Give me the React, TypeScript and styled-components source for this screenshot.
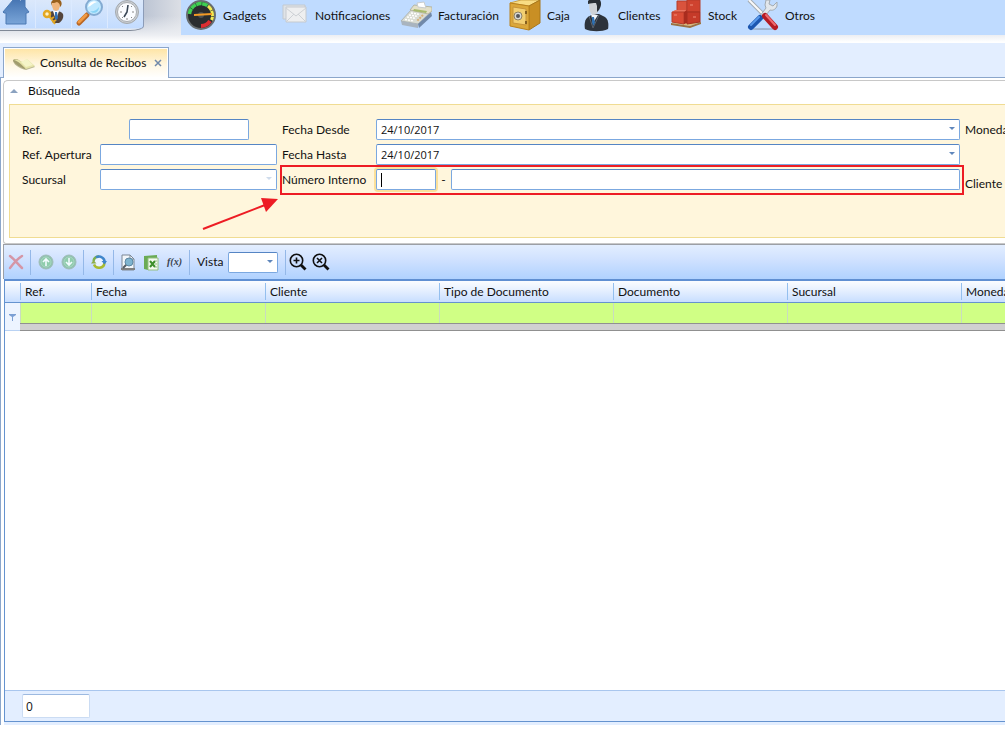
import React from 'react';
import styled, { createGlobalStyle } from 'styled-components';

const GlobalStyle = createGlobalStyle`
  * { box-sizing: border-box; }
  body {
    margin: 0;
    background: #fff;
    color: #111;
    font-family: Lato, "Open Sans", sans-serif;
    font-size: 12px;
    line-height: 16px;
  }
  button, input, select { font: inherit; color: inherit; margin: 0; }
  button { background: none; border: 0; padding: 0; cursor: pointer; }
  svg { display: block; flex: none; }
`;

const Page = styled.div`
  display: flex;
  flex-direction: column;
  min-height: 100vh;
  overflow: hidden;
`;

const Header = styled.header`
  display: flex;
  align-items: flex-start;
  height: 43px;
  background: linear-gradient(transparent 16px, #eceef2 35px, #fff 42px),
    linear-gradient(90deg, #b9c2d2 140px, #dcdfe5 181px);
`;

const QuickBar = styled.div`
  display: flex;
  flex: none;
  width: 144px;
  height: 31px;
  border-bottom: 1px solid #7f8896;
  border-right: 1px solid #8c9cb8;
  border-bottom-right-radius: 14px 5px;
  background: linear-gradient(#dbe8fb, #c3dcff 28px, #e4e9f0 29px);
`;

const QuickButton = styled.button`
  width: 36px;
  height: 28px;
  border-right: 1px solid #dceaff;
  &:last-child { border-right: 0; }
`;

const Nav = styled.nav`
  flex: 1;
  display: grid;
  grid-template-columns: 92px 123px 109px 71px 90px 77px 1fr;
  height: 35px;
  margin-left: 37px;
  padding-left: 4px;
  background: #bfdbff;
`;

const NavLink = styled.a`
  display: flex;
  align-items: center;
  gap: 6px;
  height: 32px;
  color: inherit;
  text-decoration: none;
  white-space: nowrap;
`;

const TabStrip = styled.div`
  display: flex;
  align-items: flex-end;
  height: 35px;
  padding-left: 3px;
  background: #e3eeff;
  box-shadow: inset 0 -1px #8ba6cb;
`;

const Tab = styled.div`
  display: flex;
  align-items: center;
  gap: 4px;
  width: 166px;
  height: 31px;
  padding-left: 8px;
  border: 1px solid #8ba6cb;
  border-bottom: 0;
  box-shadow: inset 0 0 0 1px #fff;
  background: linear-gradient(#fee4a3, #fff8e6 60%, #fff);
  white-space: nowrap;
`;

const TabTitle = styled.span`
  flex: 1;
`;

const TabClose = styled.button`
  width: 8px;
  height: 8px;
  margin-right: 6px;
`;

const Workspace = styled.main`
  flex: 1;
  display: flex;
  flex-direction: column;
  margin-bottom: 4px;
  padding: 2px 0 0 2px;
  border-left: 1px solid #8ba6cb;
`;

const SearchPanel = styled.section`
  padding: 0 0 5px 5px;
  border: 1px solid #c8c8c8;
  border-right: 0;
  border-radius: 5px 0 0 3px;
`;

const SearchTitle = styled.button`
  display: flex;
  align-items: center;
  gap: 10px;
  height: 23px;
  padding: 0 0 4px 1px;
`;

const SearchForm = styled.form`
  position: relative;
  display: grid;
  grid-template-columns: 255px minmax(0, 1fr) 40px;
  column-gap: 5px;
  height: 134px;
  padding: 14px 0 0 12px;
  border: 1px solid #f0dc93;
  border-right: 0;
  background: #fff6dc;
  overflow: hidden;
`;

const FieldColumn = styled.div<{ $gap?: number }>`
  display: flex;
  flex-direction: column;
  gap: ${(p) => p.$gap ?? 4}px;
`;

const Field = styled.div`
  display: flex;
  align-items: center;
  height: 21px;
`;

const Label = styled.label<{ $width?: number }>`
  flex: none;
  width: ${(p) => (p.$width ? `${p.$width}px` : 'auto')};
  white-space: nowrap;
`;

const TextInput = styled.input<{ $width?: number; $focused?: boolean }>`
  flex: ${(p) => (p.$width ? 'none' : '1')};
  width: ${(p) => p.$width ?? 0}px;
  min-width: 0;
  height: 21px;
  padding: 0 4px;
  border: 1px solid #7ba8e0;
  border-top-color: #5585c4;
  border-radius: 2px;
  background: #fff;
  outline: none;
  font-size: 11px;
  box-shadow: ${(p) => (p.$focused ? '0 0 0 2px #fbe09a' : 'none')};
`;

const Combo = styled.div<{ $width?: number; $muted?: boolean }>`
  position: relative;
  flex: ${(p) => (p.$width ? 'none' : '1')};
  width: ${(p) => (p.$width ? `${p.$width}px` : 'auto')};
  height: 21px;
  &::after {
    content: '';
    position: absolute;
    top: 8px;
    right: 5px;
    border: 3px solid transparent;
    border-top-color: ${(p) => (p.$muted ? '#cfdcec' : '#5f86bb')};
    border-bottom: 0;
    pointer-events: none;
  }
`;

const Select = styled.select`
  display: block;
  width: 100%;
  height: 21px;
  padding: 0 4px;
  border: 1px solid #7ba8e0;
  border-top-color: #5585c4;
  border-radius: 2px;
  background: #fff;
  outline: none;
  appearance: none;
  font-family: "Open Sans", sans-serif;
  font-size: 11px;
`;

const Dash = styled.span`
  width: 15px;
  text-align: center;
`;

const Caret = styled.i`
  position: absolute;
  left: 99px;
  top: 4px;
  width: 1px;
  height: 14px;
  background: #000;
`;

const HighlightedField = styled(Field)`
  position: relative;
  &::after {
    content: '';
    position: absolute;
    inset: -4px -4px -5px -2px;
    border: 2px solid #ed1c24;
    pointer-events: none;
  }
`;

const Arrow = styled.svg`
  position: absolute;
  left: 190px;
  top: 92px;
`;

const Toolbar = styled.div`
  display: flex;
  align-items: center;
  height: 35px;
  border-top: 1px solid #9c9fa5;
  border-left: 1px solid #9c9fa5;
  background: linear-gradient(#e3eeff, #cfe1ff 45%, #b0d2ff);
`;

const ToolButton = styled.button`
  display: flex;
  align-items: center;
  justify-content: center;
  width: 23px;
  height: 24px;
`;

const Separator = styled.i<{ $wide?: boolean }>`
  width: 1px;
  height: 25px;
  margin: ${(p) => (p.$wide ? '0 0 0 7px' : '0 3px')};
  background: #94b8e8;
`;

const ToolLabel = styled.label`
  width: 35px;
  padding-left: 4px;
`;

const GridArea = styled.section`
  flex: 1;
  display: flex;
  flex-direction: column;
  margin-left: 1px;
  border: 1px solid #6593cf;
  border-width: 2px 0 1px 1px;
  border-top-color: #5f8fd2;
  overflow: hidden;
`;

const Table = styled.table`
  width: 100%;
  min-width: 1131px;
  table-layout: fixed;
  border-collapse: separate;
  border-spacing: 0;
`;

const HeadCell = styled.th`
  height: 22px;
  padding: 0 5px;
  border-bottom: 1px solid #6593cf;
  background: linear-gradient(90deg, #94bfee 1px, transparent 1px) 0 2px / 100% 17px no-repeat,
    linear-gradient(#fbfdff, #e3eeff 50%, #c8deff);
  font-weight: 400;
  text-align: left;
  white-space: nowrap;
  &:first-child { background: linear-gradient(#fbfdff, #e3eeff 50%, #c8deff); }
`;

const FilterCell = styled.td`
  height: 28px;
  padding: 0;
  border-bottom: 1px solid #909090;
  background: linear-gradient(90deg, #c9dcc0 1px, transparent 1px) 0 0 / 100% 20px no-repeat,
    linear-gradient(#d0ff85 20px, #909090 20px, #909090 21px, #d0d0d0 21px);
`;

const FilterMark = styled.td`
  height: 28px;
  padding: 2px 0 0 4px;
  border-bottom: 1px solid #b9d2f3;
  background: #edf4ff;
`;

const GridBody = styled.div`
  flex: 1;
`;

const GridFooter = styled.footer`
  height: 31px;
  padding: 3px 0 0 17px;
  border-top: 1px solid #a9c6ee;
  background: #e3eeff;
`;

const CountInput = styled.input`
  display: block;
  width: 68px;
  height: 24px;
  padding: 0 3px;
  border: 1px solid #cbdcf3;
  border-top-color: #9cb9e0;
  border-radius: 2px;
  background: #fff;
  outline: none;
  font-family: "Open Sans", sans-serif;
`;

const BottomStrip = styled.div`
  height: 3px;
  margin-left: 1px;
  background: #e3eeff;
`;

const HomeIcon = () => (
  <svg width="35" height="28" viewBox="0 0 35 28">
    <defs>
      <linearGradient id="home" x2="0" y2="1">
        <stop offset="0" stopColor="#4776b4" />
        <stop offset="1" stopColor="#7aa5d8" />
      </linearGradient>
    </defs>
    <path d="M3 12 13 0h6l2 2V0h4v7l4 5-2 1h-1v11H6V13H4z" fill="url(#home)" stroke="#4a78b3" />
  </svg>
);

const UserKeyIcon = () => (
  <svg width="35" height="28" viewBox="0 0 35 28">
    <path d="M13 13c2-2 4-2 7-2s6 1 7 3c1 4-1 7-4 9h-6z" fill="#54453c" />
    <path d="M17 11h6l-3 9z" fill="#fff" />
    <path d="M19 12h2l1 6-2 3-1-3z" fill="#3474b8" />
    <ellipse cx="20" cy="5" rx="4" ry="6" fill="#f0b57c" />
    <path d="M15 6c0-3 0-5 2-6h7c2 2 2 4 1 6l-1 1c0-3-1-4-3-5-2 1-4 1-5 1z" fill="#99601d" />
    <circle cx="11" cy="14" r="3" fill="#fff3c8" stroke="#e4a822" strokeWidth="2.5" />
    <path d="M13 16l6 8m-2-2 3-2m-5-1 3-2" fill="none" stroke="#e4a822" strokeWidth="2" />
  </svg>
);

const SearchIcon = () => (
  <svg width="35" height="28" viewBox="0 0 35 28">
    <path d="M15 13l2 2" stroke="#8fa3b8" strokeWidth="4" />
    <path d="M15 15l-8 8" stroke="#b96624" strokeWidth="5" strokeLinecap="round" />
    <path d="M14 15l-7 7" stroke="#f09a45" strokeWidth="3" strokeLinecap="round" />
    <circle cx="22" cy="7" r="8" fill="#bfe8ff" stroke="#84abd2" strokeWidth="2" />
    <path d="M16 7c1-5 5-7 9-5-4 1-6 4-9 5z" fill="#fff" />
    <path d="M18 11c3 1 6 0 9-4 0 5-5 8-9 4z" fill="#87d2f5" />
  </svg>
);

const ClockIcon = () => (
  <svg width="35" height="28" viewBox="0 0 35 28">
    <circle cx="19" cy="12" r="11.5" fill="#c9cdd1" stroke="#a3a8ad" />
    <circle cx="19" cy="12" r="9.5" fill="#fafcff" stroke="#a9adb2" />
    <path d="M20 5l-1 7-3 5" fill="none" stroke="#384656" strokeWidth="1.6" />
    <path d="M12 12h2m10 0h2M19 18v2M14 6l1 1m8 0 1-1M14 18l1-1m8 0 1 1" stroke="#888" />
  </svg>
);

const GaugeIcon = () => (
  <svg width="32" height="32" viewBox="0 0 32 32">
    <circle cx="16" cy="15" r="14" fill="#2a2d2f" stroke="#686e70" strokeWidth="2" />
    <path d="M4.5 14A11.5 11.5 0 0 1 23 6" fill="none" stroke="#3ecf52" strokeWidth="3.5" strokeDasharray="5.5 .5" />
    <path d="M23 6a11.5 11.5 0 0 1 3.500 14" fill="none" stroke="#f1ea55" strokeWidth="3" strokeDasharray="5.5 .5" />
    <path d="M25 21a11 11 0 0 1-9 5" fill="none" stroke="#db2e32" strokeWidth="4" />
    <circle cx="16" cy="15" r="3" fill="#4c5153" />
    <path d="M9 14l18-1v2L9 16z" fill="#f39a25" />
  </svg>
);

const MailIcon = () => (
  <svg width="32" height="32" viewBox="-2 0 32 32">
    <path d="M4 5h22v14H4z" fill="#dfe3e7" stroke="#c3c9cf" />
    <path d="M7 7h20v15H7z" fill="#eeeff0" stroke="#c6cacf" />
    <path d="M7 8l10 8L27 8M7 22l8-8m12 8-8-8" fill="none" stroke="#cdd1d5" />
  </svg>
);

const RegisterIcon = () => (
  <svg width="32" height="32" viewBox="0 0 32 32">
    <path d="M1 21 12 9l19 3-13 12z" fill="#d9dcd3" stroke="#b0b5b1" />
    <path d="M1 21l17 3v4L2 25z" fill="#a9b4bf" />
    <path d="M18 24l13-12 1 4-13 12z" fill="#7189a9" />
    <path d="M10 10l4-5 18 2v4l-4 3z" fill="#e3e0c8" stroke="#b5b6a4" />
    <path d="M17 3l7-1 2 6-8-1z" fill="#fff" stroke="#c9cccc" />
    <path d="M14 9l13 2-1 2-13-2z" fill="#a8bb6d" />
    <path d="M11 13l9 1.500m-11 .5 9 1.500m-11 .5 9 1.500M5 19.500l9 1.500" stroke="#fff" strokeWidth="1.5" strokeDasharray="2 1" />
    <path d="M23 15l-6 6" stroke="#d7b078" strokeWidth="2" strokeDasharray="2 1" />
  </svg>
);

const SafeIcon = () => (
  <svg width="32" height="32" viewBox="0 0 32 32">
    <path d="M1 3 12 0h19L20 6z" fill="#f8dc84" stroke="#cda344" />
    <path d="M20 6l11-6v23l-11 7z" fill="#c98f24" stroke="#a8771b" />
    <path d="M1 3l19 3v24L1 26z" fill="#dba73a" stroke="#b9811e" />
    <path d="M4 7l13 2v16L4 23z" fill="#f3cf72" stroke="#c7943a" />
    <circle cx="9" cy="16" r="4" fill="#d9d9d5" stroke="#8d8063" />
    <circle cx="9" cy="16" r="2" fill="#55565a" />
    <path d="M17 11v3m0 7v3" stroke="#86601f" strokeWidth="2" />
  </svg>
);

const ClientIcon = () => (
  <svg width="32" height="32" viewBox="0 0 32 32">
    <path d="M5 29c-1-5 0-10 3-12l5-3h6l6 3c3 2 4 7 3 12-6 3-17 3-23 0z" fill="#2d333b" />
    <path d="M11 14l2 9 5-8z" fill="#f2f6fa" />
    <path d="M12 17h2l1 6-2 3-1-4z" fill="#2f71b3" />
    <path d="M9 4c0 5 1 10 4 11 4 0 6-4 6-9l-2-4-7-1z" fill="#cfd3d7" />
    <path d="M8 4V1l1-1h11c2 3 1 7-1 10l-2 2V6l-1-3c-3 0-5 0-8 1z" fill="#2a3036" />
    <path d="M9 16l4 12m6-13-6 13" stroke="#59626d" />
  </svg>
);

const StockIcon = () => (
  <svg width="32" height="32" viewBox="0 0 32 32">
    <path d="M1 23l9-3 21 2-11 4z" fill="#dcb878" />
    <path d="M1 23l19 3v2L1 25zM20 26l11-4v2l-11 4z" fill="#9b7140" />
    <path d="M7 1h10v11H7z" fill="#d9533d" stroke="#b53c2b" />
    <path d="M17 0h13v12H17z" fill="#cf432f" stroke="#b53c2b" />
    <path d="M17 12h13v10l-13 2z" fill="#c53a29" stroke="#a62f20" />
    <path d="M2 12l3-2h12l-3 2z" fill="#e9745f" />
    <path d="M2 12h12v12L2 22z" fill="#d94b35" stroke="#b53c2b" />
    <path d="M14 12l3-2v13l-3 1z" fill="#a92c1e" />
    <path d="M4 15h3m13-10h3m0 12h3" stroke="#ee8d7b" />
  </svg>
);

const ToolsIcon = () => (
  <svg width="32" height="32" viewBox="0 0 32 32">
    <ellipse cx="16" cy="29" rx="13" ry="1" fill="#9fb4cf" />
    <path d="M2 0l16 16" stroke="#a3abb2" strokeWidth="4" />
    <path d="M2 0l16 16" stroke="#fafafa" strokeWidth="2" />
    <path d="M19 0l-1 5 1 3-6 8 3 3 7-9c3 1 6-1 7-4V2l-4 4-4-2 1-4z" fill="#e2e7ec" stroke="#a3abb2" />
    <path d="M13 18l-9 9" stroke="#1d57b0" strokeWidth="6" strokeLinecap="round" />
    <path d="M12 17l-8 8" stroke="#5a9bec" strokeWidth="2" strokeLinecap="round" />
    <path d="M18 16l10 11" stroke="#b51c24" strokeWidth="6" strokeLinecap="round" />
    <path d="M19 15l9 10" stroke="#ef6a6e" strokeWidth="2" strokeLinecap="round" />
  </svg>
);

const ReceiptIcon = () => (
  <svg width="24" height="16" viewBox="0 0 24 16">
    <path d="M1 5c0 4 5 8 13 10l9-3-3-3z" fill="#b9b694" />
    <path d="M1 5c2-2 5-1 7 1l6 6-1 2C8 12 2 9 1 5z" fill="#a19c6c" />
    <path d="M2 5c3-1 5 0 8 2l5-3 8 7-9 3C9 9 6 6 2 5z" fill="#e6e4a8" />
    <path d="M9 7l6-3 6 6-7 2z" fill="#f5f4c8" />
  </svg>
);

const DeleteIcon = () => (
  <svg width="16" height="16" viewBox="0 0 16 16">
    <path d="M2 2c4 3 8 8 12 12M14 2C9 5 5 10 2 14" stroke="#d596a6" strokeWidth="2.5" strokeLinecap="round" fill="none" />
  </svg>
);

const CircleArrowIcon = ({ down }: { down?: boolean }) => (
  <svg width="16" height="16" viewBox="0 0 16 16">
    <circle cx="8" cy="8" r="7" fill="#8fc3ae" stroke="#9fbcb8" />
    <circle cx="8" cy="8" r="5" fill="#8fcdac" stroke="#a9d6c3" />
    <path d={down ? 'M8 4v7M5 8l3 3 3-3' : 'M8 12V5M5 8l3-3 3 3'} fill="none" stroke="#f2fbff" strokeWidth="1.6" />
  </svg>
);

const RefreshIcon = () => (
  <svg width="16" height="16" viewBox="0 0 16 16">
    <circle cx="8" cy="8" r="4.500" fill="#eaf3ff" />
    <path d="M2.500 7A5.500 5.500 0 0 1 8 2.500" fill="none" stroke="#7fb04d" strokeWidth="2.500" />
    <path d="M5 3.500A5.500 5.500 0 0 1 13.500 9" fill="none" stroke="#3f86cb" strokeWidth="2.500" />
    <path d="M13.500 9A5.500 5.500 0 0 1 3 10.500" fill="none" stroke="#a9bb2e" strokeWidth="2.500" />
    <path d="M10.500 7h5.500l-2.500 3.500z" fill="#3f86cb" />
    <path d="M0 9.500 2.500 6 5.500 9.500z" fill="#8fae4a" />
  </svg>
);

const PreviewIcon = () => (
  <svg width="17" height="17" viewBox="0 0 17 17">
    <path d="M2 1h8l4 4v11H2z" fill="#f2f6fa" stroke="#7d8794" />
    <path d="M10 1v4h4" fill="none" stroke="#7d8995" />
    <path d="M1 15h14" stroke="#7f7f80" strokeWidth="2" />
    <circle cx="9" cy="8" r="4" fill="#7fb4cf" stroke="#5d88a3" />
    <path d="M6 11l-3 3" stroke="#555d65" strokeWidth="2" />
  </svg>
);

const ExcelIcon = () => (
  <svg width="17" height="17" viewBox="0 0 17 17">
    <path d="M1 2l13-1v3H5v12l-4-1z" fill="#6bab55" />
    <path d="M5 4h10v12H5z" fill="#f5fbef" stroke="#93bf80" />
    <path d="M7 7l5 6m0-6-5 6" stroke="#3e8f2b" strokeWidth="2" />
    <path d="M12 7h2m-2 3h2m-2 3h2" stroke="#92bd83" />
  </svg>
);

const FunctionMark = styled.span`
  font: italic 700 10px/16px "Liberation Serif", serif;
  color: #39424f;
`;

const ZoomIcon = ({ reset }: { reset?: boolean }) => (
  <svg width="18" height="18" viewBox="0 0 18 18">
    <circle cx="7.500" cy="7.500" r="6.200" fill="none" stroke="#101010" strokeWidth="1.600" />
    <path d="M12 12l4.500 4.500" stroke="#101010" strokeWidth="2.800" />
    <path d={reset ? 'M5 5l5 5m0-5-5 5' : 'M4.500 7.500h6M7.500 4.500v6'} stroke="#101010" strokeWidth="1.600" />
  </svg>
);

const navItems = [
  { label: 'Gadgets', Icon: GaugeIcon },
  { label: 'Notificaciones', Icon: MailIcon },
  { label: 'Facturación', Icon: RegisterIcon },
  { label: 'Caja', Icon: SafeIcon },
  { label: 'Clientes', Icon: ClientIcon },
  { label: 'Stock', Icon: StockIcon },
  { label: 'Otros', Icon: ToolsIcon },
];

const quickItems = [
  { label: 'Inicio', Icon: HomeIcon },
  { label: 'Usuario', Icon: UserKeyIcon },
  { label: 'Buscar', Icon: SearchIcon },
  { label: 'Hora', Icon: ClockIcon },
];

const columns = [
  { label: 'Ref.', width: 71 },
  { label: 'Fecha', width: 174 },
  { label: 'Cliente', width: 174 },
  { label: 'Tipo de Documento', width: 174 },
  { label: 'Documento', width: 174 },
  { label: 'Sucursal', width: 174 },
  { label: 'Moneda', width: undefined },
];

export default function App() {
  return (
    <Page>
      <GlobalStyle />
      <Header>
        <QuickBar>
          {quickItems.map(({ label, Icon }) => (
            <QuickButton key={label} aria-label={label}><Icon /></QuickButton>
          ))}
        </QuickBar>
        <Nav>
          {navItems.map(({ label, Icon }) => (
            <NavLink key={label} href="#"><Icon />{label}</NavLink>
          ))}
        </Nav>
      </Header>

      <TabStrip>
        <Tab>
          <ReceiptIcon />
          <TabTitle>Consulta de Recibos</TabTitle>
          <TabClose aria-label="Cerrar">
            <svg width="8" height="8" viewBox="0 0 8 8">
              <path d="M1 1l6 6M7 1 1 7" stroke="#7089aa" strokeWidth="1.5" />
            </svg>
          </TabClose>
        </Tab>
      </TabStrip>

      <Workspace>
        <SearchPanel>
          <SearchTitle>
            <svg width="8" height="4" viewBox="0 0 8 4"><path d="M0 4l4-4 4 4z" fill="#8ba2c0" /></svg>
            Búsqueda
          </SearchTitle>
          <SearchForm>
            <FieldColumn>
              <Field>
                <Label htmlFor="ref" $width={107}>Ref.</Label>
                <TextInput id="ref" $width={120} />
              </Field>
              <Field>
                <Label htmlFor="apertura" $width={78}>Ref. Apertura</Label>
                <TextInput id="apertura" $width={177} />
              </Field>
              <Field>
                <Label htmlFor="sucursal" $width={78}>Sucursal</Label>
                <Combo $width={177} $muted><Select id="sucursal" /></Combo>
              </Field>
            </FieldColumn>
            <FieldColumn>
              <Field>
                <Label htmlFor="desde" $width={94}>Fecha Desde</Label>
                <Combo><Select id="desde"><option>24/10/2017</option></Select></Combo>
              </Field>
              <Field>
                <Label htmlFor="hasta" $width={94}>Fecha Hasta</Label>
                <Combo><Select id="hasta"><option>24/10/2017</option></Select></Combo>
              </Field>
              <HighlightedField>
                <Label htmlFor="interno" $width={94}>Número Interno</Label>
                <TextInput id="interno" $width={60} $focused />
                <Caret />
                <Dash>-</Dash>
                <TextInput aria-label="Número" />
              </HighlightedField>
            </FieldColumn>
            <FieldColumn $gap={33}>
              <Field><Label>Moneda</Label></Field>
              <Field><Label>Cliente</Label></Field>
            </FieldColumn>
            <Arrow width="80" height="36" viewBox="0 0 80 36">
              <path d="M3 32L65 8" stroke="#ed1c24" strokeWidth="2" />
              <path d="M61 1l17 1-12 13z" fill="#ed1c24" />
            </Arrow>
          </SearchForm>
        </SearchPanel>

        <Toolbar>
          <ToolButton aria-label="Eliminar"><DeleteIcon /></ToolButton>
          <Separator />
          <ToolButton aria-label="Subir"><CircleArrowIcon /></ToolButton>
          <ToolButton aria-label="Bajar"><CircleArrowIcon down /></ToolButton>
          <Separator />
          <ToolButton aria-label="Actualizar"><RefreshIcon /></ToolButton>
          <Separator />
          <ToolButton aria-label="Vista previa"><PreviewIcon /></ToolButton>
          <ToolButton aria-label="Excel"><ExcelIcon /></ToolButton>
          <ToolButton><FunctionMark>f(x)</FunctionMark></ToolButton>
          <Separator />
          <ToolLabel htmlFor="vista">Vista</ToolLabel>
          <Combo $width={50}><Select id="vista" /></Combo>
          <Separator $wide />
          <ToolButton aria-label="Acercar"><ZoomIcon /></ToolButton>
          <ToolButton aria-label="Restablecer"><ZoomIcon reset /></ToolButton>
        </Toolbar>

        <GridArea>
          <Table>
            <colgroup>
              <col width={15} />
              {columns.map((c) => <col key={c.label} width={c.width} />)}
            </colgroup>
            <thead>
              <tr>
                <HeadCell />
                {columns.map((c) => <HeadCell key={c.label}>{c.label}</HeadCell>)}
              </tr>
            </thead>
            <tbody>
              <tr>
                <FilterMark>
                  <svg width="7" height="7" viewBox="0 0 7 7"><path d="M0 0h7v1L4 3v4H3V3L0 1z" fill="#7ca0d4" /></svg>
                </FilterMark>
                {columns.map((c) => <FilterCell key={c.label} />)}
              </tr>
            </tbody>
          </Table>
          <GridBody />
          <GridFooter><CountInput aria-label="Total" defaultValue="0" /></GridFooter>
        </GridArea>
        <BottomStrip />
      </Workspace>
    </Page>
  );
}
